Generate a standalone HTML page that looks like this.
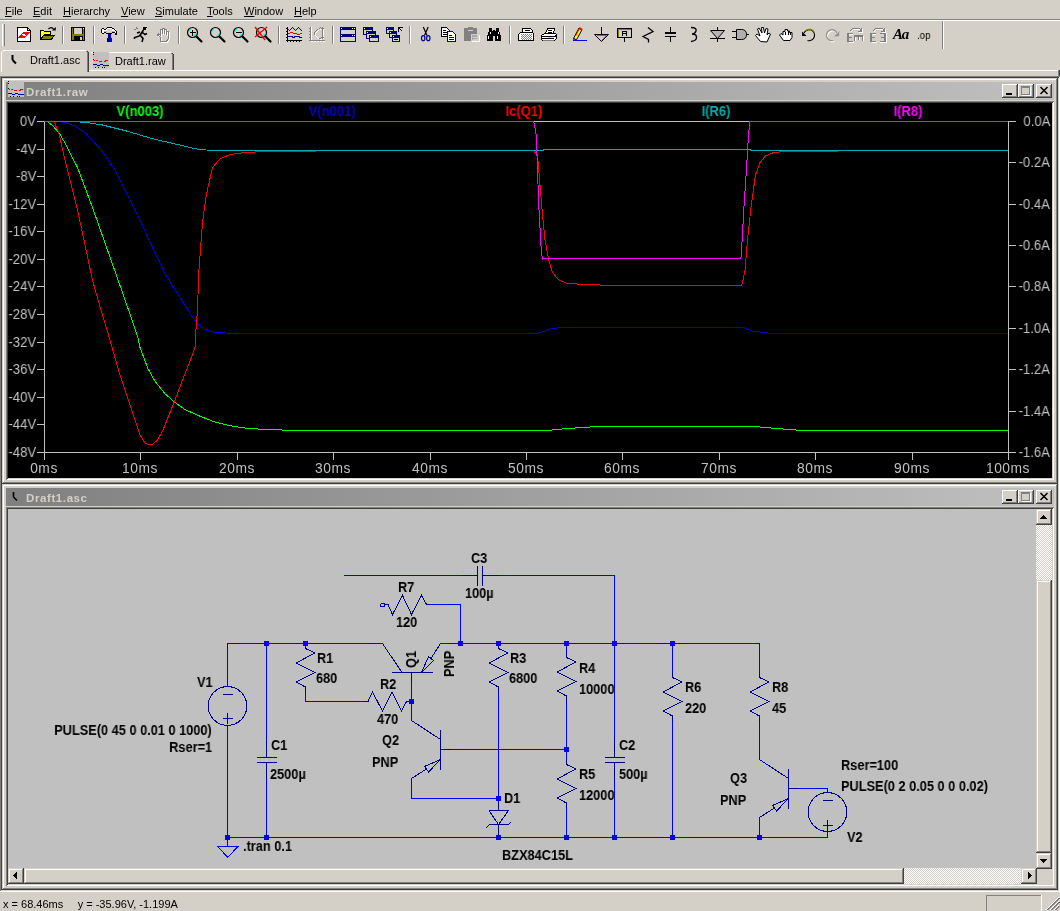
<!DOCTYPE html>
<html><head><meta charset="utf-8"><title>LTspice</title>
<style>
html,body{margin:0;padding:0;}
body{width:1060px;height:911px;background:#D4D0C8;position:relative;overflow:hidden;font-family:"Liberation Sans",sans-serif;}
.t{position:absolute;white-space:nowrap;line-height:1;will-change:transform;font-family:"Liberation Sans",sans-serif;}
svg{position:absolute;overflow:visible;}
u{text-decoration:underline;text-underline-offset:1px;}
</style></head><body>
<div class="t" style="left:5px;top:6px;font-size:11px;color:#000;font-weight:normal;"><u>F</u>ile</div>
<div class="t" style="left:33px;top:6px;font-size:11px;color:#000;font-weight:normal;"><u>E</u>dit</div>
<div class="t" style="left:63px;top:6px;font-size:11px;color:#000;font-weight:normal;"><u>H</u>ierarchy</div>
<div class="t" style="left:121px;top:6px;font-size:11px;color:#000;font-weight:normal;"><u>V</u>iew</div>
<div class="t" style="left:155px;top:6px;font-size:11px;color:#000;font-weight:normal;"><u>S</u>imulate</div>
<div class="t" style="left:207px;top:6px;font-size:11px;color:#000;font-weight:normal;"><u>T</u>ools</div>
<div class="t" style="left:244px;top:6px;font-size:11px;color:#000;font-weight:normal;"><u>W</u>indow</div>
<div class="t" style="left:294px;top:6px;font-size:11px;color:#000;font-weight:normal;"><u>H</u>elp</div>
<div style="position:absolute;left:0px;top:19px;width:1060px;height:1px;background:#808080;"></div>
<div style="position:absolute;left:0px;top:20px;width:1060px;height:1px;background:#FFFFFF;"></div>
<div style="position:absolute;left:2px;top:24px;width:1px;height:22px;background:#FFFFFF;"></div>
<div style="position:absolute;left:3px;top:24px;width:1px;height:22px;background:#D4D0C8;"></div>
<div style="position:absolute;left:4px;top:24px;width:1px;height:22px;background:#808080;"></div>
<div style="position:absolute;left:89px;top:70px;width:969px;height:1px;background:#FFFFFF;"></div>
<div style="position:absolute;left:1058px;top:70px;width:1px;height:6px;background:#808080;"></div>
<div style="position:absolute;left:1059px;top:70px;width:1px;height:6px;background:#404040;"></div>
<div style="position:absolute;left:1px;top:52px;width:1px;height:20px;background:#FFFFFF;"></div>
<div style="position:absolute;left:2px;top:51px;width:1px;height:1px;background:#FFFFFF;"></div>
<div style="position:absolute;left:3px;top:50px;width:83px;height:1px;background:#FFFFFF;"></div>
<div style="position:absolute;left:87px;top:52px;width:1px;height:20px;background:#808080;"></div>
<div style="position:absolute;left:88px;top:52px;width:1px;height:20px;background:#404040;"></div>
<div style="position:absolute;left:86px;top:51px;width:1px;height:1px;background:#808080;"></div>
<div style="position:absolute;left:87px;top:51px;width:1px;height:1px;background:#404040;"></div>
<div class="t" style="left:30px;top:55px;font-size:11px;color:#000;font-weight:normal;">Draft1.asc</div>
<svg style="left:11px;top:55px" width="10" height="11"><path d="M1.5 0v5M1.5 5l3.5 3.5" stroke="#000" stroke-width="2" fill="none"/></svg>
<div style="position:absolute;left:91px;top:52px;width:80px;height:1px;background:#FFFFFF;"></div>
<div style="position:absolute;left:172px;top:54px;width:1px;height:16px;background:#808080;"></div>
<div style="position:absolute;left:173px;top:54px;width:1px;height:16px;background:#404040;"></div>
<div style="position:absolute;left:171px;top:53px;width:1px;height:1px;background:#808080;"></div>
<div style="position:absolute;left:172px;top:53px;width:1px;height:1px;background:#404040;"></div>
<div class="t" style="left:115px;top:56px;font-size:11px;color:#000;font-weight:normal;">Draft1.raw</div>
<div style="position:absolute;left:93px;top:52px;width:16px;height:16px;background:#C0C0C0;"></div><svg style="left:93px;top:52px" width="16" height="16" shape-rendering="crispEdges"><path d="M1 8.5h1M3 8.5h2M6 9.5h3M11 9.5h2M12 8.5h3" stroke="#FF0000" stroke-width="1" fill="none"/><path d="M0 12.5h4M4 13.5h3M7 12.5h3M10 13.5h6" stroke="#0000A0" stroke-width="1" fill="none"/><path d="M0 0.5h1M0 2.5h1M0 7.5h1M2 15.5h1M5 15.5h1M9 15.5h1M11 15.5h1" stroke="#000" stroke-width="1"/></svg>
<div style="position:absolute;left:0px;top:76px;width:1060px;height:1px;background:#808080;"></div>
<div style="position:absolute;left:1px;top:77px;width:1058px;height:1px;background:#404040;"></div>
<div style="position:absolute;left:0px;top:76px;width:1px;height:815px;background:#808080;"></div>
<div style="position:absolute;left:1px;top:77px;width:1px;height:813px;background:#404040;"></div>
<div style="position:absolute;left:1058px;top:78px;width:1px;height:813px;background:#D4D0C8;"></div>
<div style="position:absolute;left:1059px;top:77px;width:1px;height:815px;background:#FFFFFF;"></div>
<div style="position:absolute;left:1px;top:890px;width:1058px;height:1px;background:#D4D0C8;"></div>
<div style="position:absolute;left:0px;top:891px;width:1060px;height:1px;background:#FFFFFF;"></div>
<div style="position:absolute;left:2px;top:78px;width:1056px;height:406px;background:#D4D0C8;"></div><div style="position:absolute;left:2px;top:483px;width:1056px;height:1px;background:#404040;"></div><div style="position:absolute;left:1057px;top:78px;width:1px;height:406px;background:#404040;"></div><div style="position:absolute;left:3px;top:482px;width:1054px;height:1px;background:#808080;"></div><div style="position:absolute;left:1056px;top:79px;width:1px;height:404px;background:#808080;"></div><div style="position:absolute;left:3px;top:79px;width:1053px;height:1px;background:#FFFFFF;"></div><div style="position:absolute;left:3px;top:79px;width:1px;height:403px;background:#FFFFFF;"></div><div style="position:absolute;left:6px;top:82px;width:1048px;height:18px;background:linear-gradient(to right,#808080,#C0C0C0);"></div><div style="position:absolute;left:8px;top:81px;width:16px;height:16px;background:#C0C0C0;"></div><svg style="left:8px;top:81px" width="16" height="16" shape-rendering="crispEdges"><path d="M1 8.5h1M3 8.5h2M6 9.5h3M11 9.5h2M12 8.5h3" stroke="#FF0000" stroke-width="1" fill="none"/><path d="M0 12.5h4M4 13.5h3M7 12.5h3M10 13.5h6" stroke="#0000A0" stroke-width="1" fill="none"/><path d="M0 0.5h1M0 2.5h1M0 7.5h1M2 15.5h1M5 15.5h1M9 15.5h1M11 15.5h1" stroke="#000" stroke-width="1"/></svg><div class="t" style="left:26px;top:87px;font-size:11.5px;color:#D4D0C8;font-weight:bold;letter-spacing:0.6px;">Draft1.raw</div><div style="position:absolute;left:1002px;top:84px;width:16px;height:14px;background:#D4D0C8;"></div><div style="position:absolute;left:1002px;top:84px;width:15px;height:1px;background:#FFFFFF;"></div><div style="position:absolute;left:1002px;top:84px;width:1px;height:13px;background:#FFFFFF;"></div><div style="position:absolute;left:1002px;top:97px;width:16px;height:1px;background:#404040;"></div><div style="position:absolute;left:1017px;top:84px;width:1px;height:14px;background:#404040;"></div><div style="position:absolute;left:1003px;top:96px;width:14px;height:1px;background:#808080;"></div><div style="position:absolute;left:1016px;top:85px;width:1px;height:12px;background:#808080;"></div><div style="position:absolute;left:1006px;top:93px;width:6px;height:2px;background:#000;"></div><div style="position:absolute;left:1018px;top:84px;width:16px;height:14px;background:#D4D0C8;"></div><div style="position:absolute;left:1018px;top:84px;width:15px;height:1px;background:#FFFFFF;"></div><div style="position:absolute;left:1018px;top:84px;width:1px;height:13px;background:#FFFFFF;"></div><div style="position:absolute;left:1018px;top:97px;width:16px;height:1px;background:#404040;"></div><div style="position:absolute;left:1033px;top:84px;width:1px;height:14px;background:#404040;"></div><div style="position:absolute;left:1019px;top:96px;width:14px;height:1px;background:#808080;"></div><div style="position:absolute;left:1032px;top:85px;width:1px;height:12px;background:#808080;"></div><div style="position:absolute;left:1021px;top:86px;width:9px;height:9px;background:#808080;"></div><div style="position:absolute;left:1022px;top:88px;width:7px;height:6px;background:#D4D0C8;"></div><div style="position:absolute;left:1022px;top:95px;width:9px;height:1px;background:#FFFFFF;"></div><div style="position:absolute;left:1030px;top:87px;width:1px;height:9px;background:#FFFFFF;"></div><div style="position:absolute;left:1036px;top:84px;width:16px;height:14px;background:#D4D0C8;"></div><div style="position:absolute;left:1036px;top:84px;width:15px;height:1px;background:#FFFFFF;"></div><div style="position:absolute;left:1036px;top:84px;width:1px;height:13px;background:#FFFFFF;"></div><div style="position:absolute;left:1036px;top:97px;width:16px;height:1px;background:#404040;"></div><div style="position:absolute;left:1051px;top:84px;width:1px;height:14px;background:#404040;"></div><div style="position:absolute;left:1037px;top:96px;width:14px;height:1px;background:#808080;"></div><div style="position:absolute;left:1050px;top:85px;width:1px;height:12px;background:#808080;"></div><svg style="left:1036px;top:84px" width="16" height="14"><path d="M4.5 3l7 7M11.5 3l-7 7" stroke="#000" stroke-width="1.5" fill="none"/></svg><div style="position:absolute;left:6px;top:101px;width:1048px;height:1px;background:#808080;"></div><div style="position:absolute;left:6px;top:101px;width:1px;height:379px;background:#808080;"></div><div style="position:absolute;left:7px;top:102px;width:1046px;height:1px;background:#404040;"></div><div style="position:absolute;left:7px;top:102px;width:1px;height:377px;background:#404040;"></div><div style="position:absolute;left:7px;top:479px;width:1047px;height:1px;background:#FFFFFF;"></div><div style="position:absolute;left:1053px;top:102px;width:1px;height:378px;background:#FFFFFF;"></div><div style="position:absolute;left:8px;top:478px;width:1045px;height:1px;background:#D4D0C8;"></div><div style="position:absolute;left:1052px;top:103px;width:1px;height:376px;background:#D4D0C8;"></div>
<div style="position:absolute;left:2px;top:484px;width:1056px;height:406px;background:#D4D0C8;"></div><div style="position:absolute;left:2px;top:889px;width:1056px;height:1px;background:#404040;"></div><div style="position:absolute;left:1057px;top:484px;width:1px;height:406px;background:#404040;"></div><div style="position:absolute;left:3px;top:888px;width:1054px;height:1px;background:#808080;"></div><div style="position:absolute;left:1056px;top:485px;width:1px;height:404px;background:#808080;"></div><div style="position:absolute;left:3px;top:485px;width:1053px;height:1px;background:#FFFFFF;"></div><div style="position:absolute;left:3px;top:485px;width:1px;height:403px;background:#FFFFFF;"></div><div style="position:absolute;left:6px;top:488px;width:1048px;height:18px;background:linear-gradient(to right,#808080,#C0C0C0);"></div><svg style="left:12px;top:492px" width="10" height="11"><path d="M1.5 0v5M1.5 5l3.5 3.5" stroke="#000" stroke-width="1.6" fill="none"/></svg><div class="t" style="left:26px;top:493px;font-size:11.5px;color:#D4D0C8;font-weight:bold;letter-spacing:0.6px;">Draft1.asc</div><div style="position:absolute;left:1002px;top:490px;width:16px;height:14px;background:#D4D0C8;"></div><div style="position:absolute;left:1002px;top:490px;width:15px;height:1px;background:#FFFFFF;"></div><div style="position:absolute;left:1002px;top:490px;width:1px;height:13px;background:#FFFFFF;"></div><div style="position:absolute;left:1002px;top:503px;width:16px;height:1px;background:#404040;"></div><div style="position:absolute;left:1017px;top:490px;width:1px;height:14px;background:#404040;"></div><div style="position:absolute;left:1003px;top:502px;width:14px;height:1px;background:#808080;"></div><div style="position:absolute;left:1016px;top:491px;width:1px;height:12px;background:#808080;"></div><div style="position:absolute;left:1006px;top:499px;width:6px;height:2px;background:#000;"></div><div style="position:absolute;left:1018px;top:490px;width:16px;height:14px;background:#D4D0C8;"></div><div style="position:absolute;left:1018px;top:490px;width:15px;height:1px;background:#FFFFFF;"></div><div style="position:absolute;left:1018px;top:490px;width:1px;height:13px;background:#FFFFFF;"></div><div style="position:absolute;left:1018px;top:503px;width:16px;height:1px;background:#404040;"></div><div style="position:absolute;left:1033px;top:490px;width:1px;height:14px;background:#404040;"></div><div style="position:absolute;left:1019px;top:502px;width:14px;height:1px;background:#808080;"></div><div style="position:absolute;left:1032px;top:491px;width:1px;height:12px;background:#808080;"></div><div style="position:absolute;left:1021px;top:492px;width:9px;height:9px;background:#808080;"></div><div style="position:absolute;left:1022px;top:494px;width:7px;height:6px;background:#D4D0C8;"></div><div style="position:absolute;left:1022px;top:501px;width:9px;height:1px;background:#FFFFFF;"></div><div style="position:absolute;left:1030px;top:493px;width:1px;height:9px;background:#FFFFFF;"></div><div style="position:absolute;left:1036px;top:490px;width:16px;height:14px;background:#D4D0C8;"></div><div style="position:absolute;left:1036px;top:490px;width:15px;height:1px;background:#FFFFFF;"></div><div style="position:absolute;left:1036px;top:490px;width:1px;height:13px;background:#FFFFFF;"></div><div style="position:absolute;left:1036px;top:503px;width:16px;height:1px;background:#404040;"></div><div style="position:absolute;left:1051px;top:490px;width:1px;height:14px;background:#404040;"></div><div style="position:absolute;left:1037px;top:502px;width:14px;height:1px;background:#808080;"></div><div style="position:absolute;left:1050px;top:491px;width:1px;height:12px;background:#808080;"></div><svg style="left:1036px;top:490px" width="16" height="14"><path d="M4.5 3l7 7M11.5 3l-7 7" stroke="#000" stroke-width="1.5" fill="none"/></svg><div style="position:absolute;left:6px;top:507px;width:1048px;height:1px;background:#808080;"></div><div style="position:absolute;left:6px;top:507px;width:1px;height:379px;background:#808080;"></div><div style="position:absolute;left:7px;top:508px;width:1046px;height:1px;background:#404040;"></div><div style="position:absolute;left:7px;top:508px;width:1px;height:377px;background:#404040;"></div><div style="position:absolute;left:7px;top:885px;width:1047px;height:1px;background:#FFFFFF;"></div><div style="position:absolute;left:1053px;top:508px;width:1px;height:378px;background:#FFFFFF;"></div><div style="position:absolute;left:8px;top:884px;width:1045px;height:1px;background:#D4D0C8;"></div><div style="position:absolute;left:1052px;top:509px;width:1px;height:376px;background:#D4D0C8;"></div>
<div class="t" style="left:3px;top:899px;font-size:11px;color:#000;font-weight:normal;">x = 68.46ms&nbsp;&nbsp;&nbsp;&nbsp;&thinsp;y = -35.96V, -1.199A</div>
<div style="position:absolute;left:986px;top:895px;width:56px;height:1px;background:#808080;"></div><div style="position:absolute;left:986px;top:895px;width:1px;height:16px;background:#808080;"></div><div style="position:absolute;left:1041px;top:895px;width:1px;height:16px;background:#FFFFFF;"></div>
<svg style="left:1046px;top:897px" width="14" height="14" shape-rendering="crispEdges"><path d="M13 1L1 13M13 5L5 13M13 9L9 13" stroke="#808080" stroke-width="2" fill="none"/><path d="M13 0L0 13M13 4L4 13M13 8L8 13" stroke="#FFFFFF" stroke-width="1" fill="none"/></svg>
<div style="position:absolute;left:8px;top:103px;width:1044px;height:375px;background:#000000;"></div>
<svg style="left:0;top:0" width="1060" height="911" shape-rendering="crispEdges" fill="none" stroke-width="1"><path stroke="#C0C0C0" d="M44.5 121v339M1008.5 121v339M44 121.5h965M37 452.5h979"/><path stroke="#C0C0C0" d="M37 121.5h8M37 149.5h8M37 176.5h8M37 204.5h8M37 231.5h8M37 259.5h8M37 286.5h8M37 314.5h8M37 342.5h8M37 369.5h8M37 397.5h8M37 424.5h8M37 452.5h8M1008 121.5h8M1008 162.5h8M1008 204.5h8M1008 245.5h8M1008 286.5h8M1008 328.5h8M1008 369.5h8M1008 411.5h8M1008 452.5h8M44.5 452v8M140.5 452v8M237.5 452v8M333.5 452v8M430.5 452v8M526.5 452v8M622.5 452v8M719.5 452v8M815.5 452v8M912.5 452v8M1008.5 452v8"/><polyline stroke="#00FF00" points="44.5,121.5 47.5,121.75 52,125 58.75,132.5 65,143 77.5,167.5 92.5,207.5 107.5,250 122.5,292.5 137.5,336 140,347.5 148,368.75 155,381.25 165,393.75 175,402.5 185,409.5 200,416.25 215,422 230,425.75 245,428 265,429.5 290,430.25 305,430.5 548,430.5 557,429.5 568,428.5 590,427 600,426.5 754,426.5 765,427.5 777,428.5 796,430 810,430.5 1008,430.5"/><polyline stroke="#0000C8" points="44.5,121.5 60,121.5 65,122.5 75,126 85,132.5 100,148.75 115,170 127.5,195 140,220 152.5,247.5 165,273.75 177.5,293.75 181.25,300 190,313.75 197.5,323.75 200,326.25 205,329.5 210,331.25 215,332.5 230,333.2 305,333.5 537.5,333.5 545,331 550,329 561,327.5 743.75,327.5 745,328 752.5,331.25 765,332.75 775,333.5 1008,333.5"/><polyline stroke="#FF0000" points="50,121.5 53.75,121.5 58.75,132.5 65,160 77.5,210 92.5,280 98,300 110,340 120,375 130,405 140,435 145,443 148.75,445 152.5,444.5 157.5,440 162.5,431.25 170,412.5 175,400 182.5,380 190,361.25 195,347.5 196.25,325 197.5,310 198.75,272.5 202.5,222.5 206.25,195 212.5,167.5 220,158.75 230,154.5 245,152.5 265,151.5 316,151.5"/><polyline stroke="#FF0000" points="534.25,151.5 537.5,155 540,185 542.5,215 545,240 548.75,260 552.5,272.5 558.75,280 566.25,283 580,284.25 605,285.2 741.25,285.5 742.5,282.5 745,270 747.5,240 751.25,205 755.5,175 760,162.5 765,156.25 772.5,153 782.5,151.5 837.5,151.5"/><polyline stroke="#00AAAA" points="44.5,121.5 77.5,121.75 90,123 102.5,125 127.5,131.25 152.5,138.75 177.5,144.5 195,148.75 206.25,150 220,150.5 543.75,150.5 544,149.5 750,149.5 750.5,150.5 1008,150.5"/><polyline stroke="#FF00FF" points="44.5,121.5 533.75,121.5 536.25,135 538.75,205 541.25,250 542.5,260 543,258.5 740.5,258.5 741.25,256.25 743.75,210 746.25,172.5 748.5,135 750,121.5 1008,121.5"/></svg>
<div class="t" style="right:1024px;top:115px;font-size:13.8px;color:#C0C0C0;transform-origin:100% 0;transform:scaleX(0.95)">0V</div>
<div class="t" style="right:1024px;top:143px;font-size:13.8px;color:#C0C0C0;transform-origin:100% 0;transform:scaleX(0.95)">-4V</div>
<div class="t" style="right:1024px;top:170px;font-size:13.8px;color:#C0C0C0;transform-origin:100% 0;transform:scaleX(0.95)">-8V</div>
<div class="t" style="right:1024px;top:198px;font-size:13.8px;color:#C0C0C0;transform-origin:100% 0;transform:scaleX(0.95)">-12V</div>
<div class="t" style="right:1024px;top:225px;font-size:13.8px;color:#C0C0C0;transform-origin:100% 0;transform:scaleX(0.95)">-16V</div>
<div class="t" style="right:1024px;top:253px;font-size:13.8px;color:#C0C0C0;transform-origin:100% 0;transform:scaleX(0.95)">-20V</div>
<div class="t" style="right:1024px;top:280px;font-size:13.8px;color:#C0C0C0;transform-origin:100% 0;transform:scaleX(0.95)">-24V</div>
<div class="t" style="right:1024px;top:308px;font-size:13.8px;color:#C0C0C0;transform-origin:100% 0;transform:scaleX(0.95)">-28V</div>
<div class="t" style="right:1024px;top:336px;font-size:13.8px;color:#C0C0C0;transform-origin:100% 0;transform:scaleX(0.95)">-32V</div>
<div class="t" style="right:1024px;top:363px;font-size:13.8px;color:#C0C0C0;transform-origin:100% 0;transform:scaleX(0.95)">-36V</div>
<div class="t" style="right:1024px;top:391px;font-size:13.8px;color:#C0C0C0;transform-origin:100% 0;transform:scaleX(0.95)">-40V</div>
<div class="t" style="right:1024px;top:418px;font-size:13.8px;color:#C0C0C0;transform-origin:100% 0;transform:scaleX(0.95)">-44V</div>
<div class="t" style="right:1024px;top:446px;font-size:13.8px;color:#C0C0C0;transform-origin:100% 0;transform:scaleX(0.95)">-48V</div>
<div class="t" style="right:10px;top:115px;font-size:13.8px;color:#C0C0C0;transform-origin:100% 0;transform:scaleX(0.95)">0.0A</div>
<div class="t" style="right:10px;top:156px;font-size:13.8px;color:#C0C0C0;transform-origin:100% 0;transform:scaleX(0.95)">-0.2A</div>
<div class="t" style="right:10px;top:198px;font-size:13.8px;color:#C0C0C0;transform-origin:100% 0;transform:scaleX(0.95)">-0.4A</div>
<div class="t" style="right:10px;top:239px;font-size:13.8px;color:#C0C0C0;transform-origin:100% 0;transform:scaleX(0.95)">-0.6A</div>
<div class="t" style="right:10px;top:280px;font-size:13.8px;color:#C0C0C0;transform-origin:100% 0;transform:scaleX(0.95)">-0.8A</div>
<div class="t" style="right:10px;top:322px;font-size:13.8px;color:#C0C0C0;transform-origin:100% 0;transform:scaleX(0.95)">-1.0A</div>
<div class="t" style="right:10px;top:363px;font-size:13.8px;color:#C0C0C0;transform-origin:100% 0;transform:scaleX(0.95)">-1.2A</div>
<div class="t" style="right:10px;top:405px;font-size:13.8px;color:#C0C0C0;transform-origin:100% 0;transform:scaleX(0.95)">-1.4A</div>
<div class="t" style="right:10px;top:446px;font-size:13.8px;color:#C0C0C0;transform-origin:100% 0;transform:scaleX(0.95)">-1.6A</div>
<div class="t" style="left:14px;width:60px;text-align:center;top:462px;font-size:13.8px;color:#C0C0C0;letter-spacing:0.55px">0ms</div>
<div class="t" style="left:110px;width:60px;text-align:center;top:462px;font-size:13.8px;color:#C0C0C0;letter-spacing:0.55px">10ms</div>
<div class="t" style="left:207px;width:60px;text-align:center;top:462px;font-size:13.8px;color:#C0C0C0;letter-spacing:0.55px">20ms</div>
<div class="t" style="left:303px;width:60px;text-align:center;top:462px;font-size:13.8px;color:#C0C0C0;letter-spacing:0.55px">30ms</div>
<div class="t" style="left:400px;width:60px;text-align:center;top:462px;font-size:13.8px;color:#C0C0C0;letter-spacing:0.55px">40ms</div>
<div class="t" style="left:496px;width:60px;text-align:center;top:462px;font-size:13.8px;color:#C0C0C0;letter-spacing:0.55px">50ms</div>
<div class="t" style="left:592px;width:60px;text-align:center;top:462px;font-size:13.8px;color:#C0C0C0;letter-spacing:0.55px">60ms</div>
<div class="t" style="left:689px;width:60px;text-align:center;top:462px;font-size:13.8px;color:#C0C0C0;letter-spacing:0.55px">70ms</div>
<div class="t" style="left:785px;width:60px;text-align:center;top:462px;font-size:13.8px;color:#C0C0C0;letter-spacing:0.55px">80ms</div>
<div class="t" style="left:882px;width:60px;text-align:center;top:462px;font-size:13.8px;color:#C0C0C0;letter-spacing:0.55px">90ms</div>
<div class="t" style="left:978px;width:60px;text-align:center;top:462px;font-size:13.8px;color:#C0C0C0;letter-spacing:0.55px">100ms</div>
<div class="t" style="left:100px;width:80px;text-align:center;top:105px;font-size:13.8px;font-weight:bold;color:#00FF00;transform:scaleX(0.94)">V(n003)</div>
<div class="t" style="left:291.5px;width:80px;text-align:center;top:105px;font-size:13.8px;font-weight:bold;color:#0000C8;transform:scaleX(0.94)">V(n001)</div>
<div class="t" style="left:484px;width:80px;text-align:center;top:105px;font-size:13.8px;font-weight:bold;color:#FF0000;transform:scaleX(0.94)">Ic(Q1)</div>
<div class="t" style="left:676px;width:80px;text-align:center;top:105px;font-size:13.8px;font-weight:bold;color:#00AAAA;transform:scaleX(0.94)">I(R6)</div>
<div class="t" style="left:868px;width:80px;text-align:center;top:105px;font-size:13.8px;font-weight:bold;color:#FF00FF;transform:scaleX(0.94)">I(R8)</div>
<div style="position:absolute;left:8px;top:509px;width:1028px;height:359px;background:#C0C0C0;"></div>
<svg style="left:0;top:0" width="1060" height="911" shape-rendering="crispEdges" fill="none" stroke-width="1"><path stroke="#0000FF" d="M227.5 686.5L227.5 643.5L382.5 643.5M440.5 643.5L759.5 643.5L759.5 672.5M227.5 725.5L227.5 846.5M227.5 837.5L827.5 837.5L827.5 831.5M217.5 846.5L238.5 846.5M217.5 846.5L228 857.5M238 846.5L227.5 857.5M266.5 643.5L266.5 740.5M266.5 779.22L266.5 837.5M305.5 691.9L305.5 701.5L363.5 701.5M411.5 682L411.5 720.5M431.5 604.5L460.5 604.5L460.5 643.5M343.5 575.5L460.5 575.5M499.22 575.5L614.5 575.5L614.5 643.5M498.5 691.9L498.5 798.5M450.5 749.5L566.5 749.5M411.5 778.5L411.5 798.5L498.5 798.5M566.5 643.5L566.5 652.5M566.5 700.9L566.5 759.5M566.5 807.9L566.5 837.5M614.5 643.5L614.5 740.5M614.5 779.22L614.5 837.5M672.5 643.5L672.5 672.5M672.5 720.9L672.5 837.5M759.5 720.9L759.5 759.5M798 788.5L827.5 788.5L827.5 792.5M759.5 817.5L759.5 837.5"/><path stroke="#000094" d="M208.14 706a19.36 19.36 0 1 0 38.72 0a19.36 19.36 0 1 0 -38.72 0M227.5 686.5L227.5 686.5M227.5 725.5L227.5 725.5M222.5 694.5L233.0 694.5M222.5 718.0L233.0 718.0M227.5 713.0L227.5 723.5M266.5 740.5L266.5 757.5M266.5 762.5L266.5 779.0M256.5 757.5L276.5 757.5M256.5 762.5L276.5 762.5M305.5 643.5L305.5 648.5L315.0 653.0L296.0 663.0L315.0 672.5L296.0 682.0L305.5 687.0L305.5 692.0M363.0 701.5L368.0 701.5L372.5 692.0L382.5 711.0L392.0 692.0L401.5 711.0L406.5 701.5L411.5 701.5M392.0 672.5L432.5 672.5M411.5 672.5L411.5 682.0M382.5 643.5L402.0 672.5M440.5 643.5L431.0 658.5M421.5 672.5L428.5 656.5L433.5 660.5L421.5 672.5M380.5 603.5L384.5 603.5L384.5 606.5L380.5 606.5L380.5 603.5M385.0 604.5L388.0 604.5L392.5 614.5L402.5 595.5L411.5 614.5L421.5 595.5L426.5 604.5L431.5 604.5M460.5 575.5L477.5 575.5M482.5 575.5L499.0 575.5M477.5 565.5L477.5 585.5M482.5 565.5L482.5 585.5M498.5 643.5L498.5 648.5L508.0 653.0L489.0 663.0L508.0 672.5L489.0 682.0L498.5 687.0L498.5 692.0M498.5 798.5L498.5 810.5M489.0 810.5L509.0 810.5M489.0 810.5L498.5 824.5M508.5 810.5L498.5 824.5M486.0 828.0L489.5 824.5L508.5 824.5L511.0 822.0M498.5 824.5L498.5 837.5M440.5 730.0L440.5 770.0M440.5 749.5L450.5 749.5M411.5 720.5L440.5 739.5M426.5 769.0L411.5 778.5M440.5 759.5L424.5 766.5L428.5 772.0L440.5 759.5M566.5 652.5L566.5 657.5L576.0 662.0L557.0 672.0L576.0 681.5L557.0 691.0L566.5 696.0L566.5 701.0M566.5 759.5L566.5 764.5L576.0 769.0L557.0 779.0L576.0 788.5L557.0 798.0L566.5 803.0L566.5 808.0M614.5 740.5L614.5 757.5M614.5 762.5L614.5 779.0M604.5 757.5L624.5 757.5M604.5 762.5L624.5 762.5M672.5 672.5L672.5 677.5L682.0 682.0L663.0 692.0L682.0 701.5L663.0 711.0L672.5 716.0L672.5 721.0M759.5 672.5L759.5 677.5L769.0 682.0L750.0 692.0L769.0 701.5L750.0 711.0L759.5 716.0L759.5 721.0M788.5 769.0L788.5 809.0M788.5 788.5L798.0 788.5M759.5 759.5L788.5 778.5M774.5 808.0L759.5 817.5M788.5 798.5L772.5 805.5L776.5 811.0L788.5 798.5M808.14 812a19.36 19.36 0 1 0 38.72 0a19.36 19.36 0 1 0 -38.72 0M827.5 792.5L827.5 792.5M827.5 831.5L827.5 831.5M822.5 800.0L833.0 800.0M822.5 825.0L833.0 825.0M827.5 820.0L827.5 830.5"/><rect x="264.0" y="641.0" width="5" height="5" fill="#0000FF"/><rect x="303.0" y="641.0" width="5" height="5" fill="#0000FF"/><rect x="458.0" y="641.0" width="5" height="5" fill="#0000FF"/><rect x="496.0" y="641.0" width="5" height="5" fill="#0000FF"/><rect x="564.0" y="641.0" width="5" height="5" fill="#0000FF"/><rect x="612.0" y="641.0" width="5" height="5" fill="#0000FF"/><rect x="670.0" y="641.0" width="5" height="5" fill="#0000FF"/><rect x="225.0" y="835.0" width="5" height="5" fill="#0000FF"/><rect x="264.0" y="835.0" width="5" height="5" fill="#0000FF"/><rect x="496.0" y="835.0" width="5" height="5" fill="#0000FF"/><rect x="564.0" y="835.0" width="5" height="5" fill="#0000FF"/><rect x="612.0" y="835.0" width="5" height="5" fill="#0000FF"/><rect x="670.0" y="835.0" width="5" height="5" fill="#0000FF"/><rect x="757.0" y="835.0" width="5" height="5" fill="#0000FF"/><rect x="409.0" y="699.0" width="5" height="5" fill="#0000FF"/><rect x="496.0" y="796.0" width="5" height="5" fill="#0000FF"/><rect x="564.0" y="747.0" width="5" height="5" fill="#0000FF"/></svg>
<style>.sl{font-size:14px;font-weight:bold;color:#000;transform-origin:0 0;transform:scaleX(0.912);}</style>
<div class="t sl" style="left:197px;top:675.4px;">V1</div>
<div class="t sl" style="transform-origin:100% 0;right:848px;top:723.4px">PULSE(0 45 0 0.01 0 1000)</div>
<div class="t sl" style="transform-origin:100% 0;right:848px;top:740.4px">Rser=1</div>
<div class="t sl" style="left:271px;top:738.4px;">C1</div>
<div class="t sl" style="left:270px;top:767.4px;">2500µ</div>
<div class="t sl" style="left:317px;top:651.4px;">R1</div>
<div class="t sl" style="left:316px;top:671.4px;">680</div>
<div class="t sl" style="left:380px;top:677.4px;">R2</div>
<div class="t sl" style="left:377px;top:712.4px;">470</div>
<div class="t sl" style="left:398px;top:580.4px;">R7</div>
<div class="t sl" style="left:396px;top:615.4px;">120</div>
<div class="t sl" style="left:471px;top:551.4px;">C3</div>
<div class="t sl" style="left:465px;top:586.4px;">100µ</div>
<div class="t sl" style="left:510px;top:651.4px;">R3</div>
<div class="t sl" style="left:509px;top:671.4px;">6800</div>
<div class="t sl" style="left:579px;top:661.4px;">R4</div>
<div class="t sl" style="left:579px;top:682.4px;">10000</div>
<div class="t sl" style="left:579px;top:767.4px;">R5</div>
<div class="t sl" style="left:579px;top:788.4px;">12000</div>
<div class="t sl" style="left:619px;top:738.4px;">C2</div>
<div class="t sl" style="left:619px;top:767.4px;">500µ</div>
<div class="t sl" style="left:685px;top:680.4px;">R6</div>
<div class="t sl" style="left:685px;top:701.4px;">220</div>
<div class="t sl" style="left:772px;top:680.4px;">R8</div>
<div class="t sl" style="left:772px;top:701.4px;">45</div>
<div class="t sl" style="left:382px;top:733.4px;">Q2</div>
<div class="t sl" style="left:372px;top:755.4px;">PNP</div>
<div class="t sl" style="left:730px;top:771.4px;">Q3</div>
<div class="t sl" style="left:720px;top:793.4px;">PNP</div>
<div class="t sl" style="left:504px;top:791.4px;">D1</div>
<div class="t sl" style="left:502px;top:848.4px;">BZX84C15L</div>
<div class="t sl" style="left:841px;top:758.4px;">Rser=100</div>
<div class="t sl" style="left:841px;top:779.4px;">PULSE(0 2 0.05 0 0 0.02)</div>
<div class="t sl" style="left:847px;top:830.4px;">V2</div>
<div class="t sl" style="left:243px;top:839.4px;">.tran 0.1</div>
<div class="t sl" style="left:404px;top:668px;transform-origin:0 0;transform:rotate(-90deg) scaleX(0.912)">Q1</div>
<div class="t sl" style="left:442px;top:677px;transform-origin:0 0;transform:rotate(-90deg) scaleX(0.912)">PNP</div>
<div style="position:absolute;left:1036px;top:509px;width:16px;height:360px;background:repeating-conic-gradient(#FFFFFF 0% 25%, #D4D0C8 0% 50%) 0 0/2px 2px;"></div>
<div style="position:absolute;left:1036px;top:509px;width:16px;height:16px;background:#D4D0C8;"></div><div style="position:absolute;left:1036px;top:509px;width:15px;height:1px;background:#D4D0C8;"></div><div style="position:absolute;left:1036px;top:509px;width:1px;height:15px;background:#D4D0C8;"></div><div style="position:absolute;left:1037px;top:510px;width:13px;height:1px;background:#FFFFFF;"></div><div style="position:absolute;left:1037px;top:510px;width:1px;height:13px;background:#FFFFFF;"></div><div style="position:absolute;left:1036px;top:524px;width:16px;height:1px;background:#404040;"></div><div style="position:absolute;left:1051px;top:509px;width:1px;height:16px;background:#404040;"></div><div style="position:absolute;left:1037px;top:523px;width:14px;height:1px;background:#808080;"></div><div style="position:absolute;left:1050px;top:510px;width:1px;height:14px;background:#808080;"></div>
<svg style="left:0;top:0" width="1060" height="911" shape-rendering="crispEdges"><path d="M1040 519h7l-3.5 -4z" fill="#000"/></svg>
<div style="position:absolute;left:1036px;top:853px;width:16px;height:16px;background:#D4D0C8;"></div><div style="position:absolute;left:1036px;top:853px;width:15px;height:1px;background:#D4D0C8;"></div><div style="position:absolute;left:1036px;top:853px;width:1px;height:15px;background:#D4D0C8;"></div><div style="position:absolute;left:1037px;top:854px;width:13px;height:1px;background:#FFFFFF;"></div><div style="position:absolute;left:1037px;top:854px;width:1px;height:13px;background:#FFFFFF;"></div><div style="position:absolute;left:1036px;top:868px;width:16px;height:1px;background:#404040;"></div><div style="position:absolute;left:1051px;top:853px;width:1px;height:16px;background:#404040;"></div><div style="position:absolute;left:1037px;top:867px;width:14px;height:1px;background:#808080;"></div><div style="position:absolute;left:1050px;top:854px;width:1px;height:14px;background:#808080;"></div>
<svg style="left:0;top:0" width="1060" height="911" shape-rendering="crispEdges"><path d="M1040 859h7l-3.5 4z" fill="#000"/></svg>
<div style="position:absolute;left:1036px;top:580px;width:16px;height:273px;background:#D4D0C8;"></div><div style="position:absolute;left:1036px;top:580px;width:15px;height:1px;background:#D4D0C8;"></div><div style="position:absolute;left:1036px;top:580px;width:1px;height:272px;background:#D4D0C8;"></div><div style="position:absolute;left:1037px;top:581px;width:13px;height:1px;background:#FFFFFF;"></div><div style="position:absolute;left:1037px;top:581px;width:1px;height:270px;background:#FFFFFF;"></div><div style="position:absolute;left:1036px;top:852px;width:16px;height:1px;background:#404040;"></div><div style="position:absolute;left:1051px;top:580px;width:1px;height:273px;background:#404040;"></div><div style="position:absolute;left:1037px;top:851px;width:14px;height:1px;background:#808080;"></div><div style="position:absolute;left:1050px;top:581px;width:1px;height:271px;background:#808080;"></div>
<div style="position:absolute;left:1036px;top:869px;width:16px;height:15px;background:#D4D0C8;"></div>
<div style="position:absolute;left:8px;top:868px;width:1029px;height:16px;background:repeating-conic-gradient(#FFFFFF 0% 25%, #D4D0C8 0% 50%) 0 0/2px 2px;"></div>
<div style="position:absolute;left:8px;top:868px;width:16px;height:16px;background:#D4D0C8;"></div><div style="position:absolute;left:8px;top:868px;width:15px;height:1px;background:#D4D0C8;"></div><div style="position:absolute;left:8px;top:868px;width:1px;height:15px;background:#D4D0C8;"></div><div style="position:absolute;left:9px;top:869px;width:13px;height:1px;background:#FFFFFF;"></div><div style="position:absolute;left:9px;top:869px;width:1px;height:13px;background:#FFFFFF;"></div><div style="position:absolute;left:8px;top:883px;width:16px;height:1px;background:#404040;"></div><div style="position:absolute;left:23px;top:868px;width:1px;height:16px;background:#404040;"></div><div style="position:absolute;left:9px;top:882px;width:14px;height:1px;background:#808080;"></div><div style="position:absolute;left:22px;top:869px;width:1px;height:14px;background:#808080;"></div>
<svg style="left:0;top:0" width="1060" height="911" shape-rendering="crispEdges"><path d="M17 872v7l-4 -3.5z" fill="#000"/></svg>
<div style="position:absolute;left:1021px;top:868px;width:16px;height:16px;background:#D4D0C8;"></div><div style="position:absolute;left:1021px;top:868px;width:15px;height:1px;background:#D4D0C8;"></div><div style="position:absolute;left:1021px;top:868px;width:1px;height:15px;background:#D4D0C8;"></div><div style="position:absolute;left:1022px;top:869px;width:13px;height:1px;background:#FFFFFF;"></div><div style="position:absolute;left:1022px;top:869px;width:1px;height:13px;background:#FFFFFF;"></div><div style="position:absolute;left:1021px;top:883px;width:16px;height:1px;background:#404040;"></div><div style="position:absolute;left:1036px;top:868px;width:1px;height:16px;background:#404040;"></div><div style="position:absolute;left:1022px;top:882px;width:14px;height:1px;background:#808080;"></div><div style="position:absolute;left:1035px;top:869px;width:1px;height:14px;background:#808080;"></div>
<svg style="left:0;top:0" width="1060" height="911" shape-rendering="crispEdges"><path d="M1028 872v7l4 -3.5z" fill="#000"/></svg>
<div style="position:absolute;left:24px;top:868px;width:880px;height:16px;background:#D4D0C8;"></div><div style="position:absolute;left:24px;top:868px;width:879px;height:1px;background:#D4D0C8;"></div><div style="position:absolute;left:24px;top:868px;width:1px;height:15px;background:#D4D0C8;"></div><div style="position:absolute;left:25px;top:869px;width:877px;height:1px;background:#FFFFFF;"></div><div style="position:absolute;left:25px;top:869px;width:1px;height:13px;background:#FFFFFF;"></div><div style="position:absolute;left:24px;top:883px;width:880px;height:1px;background:#404040;"></div><div style="position:absolute;left:903px;top:868px;width:1px;height:16px;background:#404040;"></div><div style="position:absolute;left:25px;top:882px;width:878px;height:1px;background:#808080;"></div><div style="position:absolute;left:902px;top:869px;width:1px;height:14px;background:#808080;"></div>
<div style="position:absolute;left:62px;top:26px;width:1px;height:18px;background:#808080;"></div><div style="position:absolute;left:63px;top:26px;width:1px;height:18px;background:#FFFFFF;"></div>
<div style="position:absolute;left:93px;top:26px;width:1px;height:18px;background:#808080;"></div><div style="position:absolute;left:94px;top:26px;width:1px;height:18px;background:#FFFFFF;"></div>
<div style="position:absolute;left:124px;top:26px;width:1px;height:18px;background:#808080;"></div><div style="position:absolute;left:125px;top:26px;width:1px;height:18px;background:#FFFFFF;"></div>
<div style="position:absolute;left:178px;top:26px;width:1px;height:18px;background:#808080;"></div><div style="position:absolute;left:179px;top:26px;width:1px;height:18px;background:#FFFFFF;"></div>
<div style="position:absolute;left:278px;top:26px;width:1px;height:18px;background:#808080;"></div><div style="position:absolute;left:279px;top:26px;width:1px;height:18px;background:#FFFFFF;"></div>
<div style="position:absolute;left:332px;top:26px;width:1px;height:18px;background:#808080;"></div><div style="position:absolute;left:333px;top:26px;width:1px;height:18px;background:#FFFFFF;"></div>
<div style="position:absolute;left:409px;top:26px;width:1px;height:18px;background:#808080;"></div><div style="position:absolute;left:410px;top:26px;width:1px;height:18px;background:#FFFFFF;"></div>
<div style="position:absolute;left:509px;top:26px;width:1px;height:18px;background:#808080;"></div><div style="position:absolute;left:510px;top:26px;width:1px;height:18px;background:#FFFFFF;"></div>
<div style="position:absolute;left:563px;top:26px;width:1px;height:18px;background:#808080;"></div><div style="position:absolute;left:564px;top:26px;width:1px;height:18px;background:#FFFFFF;"></div>
<div style="position:absolute;left:942px;top:21px;width:1px;height:28px;background:#808080;"></div><div style="position:absolute;left:943px;top:21px;width:1px;height:28px;background:#FFFFFF;"></div>
<svg style="left:17px;top:27px" width="16" height="16" shape-rendering="crispEdges"><path d="M0.5 0.5h10l3 3v11h-13z" fill="#fff" stroke="#000"/><path d="M10.5 0.5v3h3" fill="none" stroke="#000"/><path d="M6 5h7l-5 6h-7z" fill="#f00"/><path d="M6 7h2v2h-2z" fill="#fff"/><rect x="8" y="8" width="1" height="1" fill="#fff"/><rect x="5" y="7" width="1" height="1" fill="#fff"/></svg>
<svg style="left:40px;top:27px" width="16" height="16" shape-rendering="crispEdges"><defs><pattern id="dy" width="2" height="2" patternUnits="userSpaceOnUse"><rect width="2" height="2" fill="#ff0"/><rect width="1" height="1" fill="#fff"/><rect x="1" y="1" width="1" height="1" fill="#fff"/></pattern></defs><path d="M0.5 12.5v-9h3l1 1h6v3h-6z" fill="url(#dy)" stroke="#000"/><path d="M0.5 12.5l3.5-4.500h11l-4 4.500z" fill="#808000" stroke="#000"/><g shape-rendering="auto"><path d="M8.500 2Q11 -1 14 2.500" fill="none" stroke="#000" stroke-width="1.200"/><path d="M12 3.500h3.800v-3.500z" fill="#000"/></g></svg>
<svg style="left:71px;top:27px" width="16" height="16" shape-rendering="crispEdges"><rect x="0.5" y="0.5" width="13" height="13" fill="#808000" stroke="#000"/><rect x="3" y="1" width="8" height="6" fill="#D4D0C8"/><rect x="2" y="1" width="1" height="6" fill="#000"/><rect x="11" y="1" width="1" height="6" fill="#000"/><rect x="12" y="1" width="1" height="1" fill="#fff"/><rect x="3" y="9" width="9" height="4" fill="#000"/><rect x="9" y="10" width="2" height="3" fill="#D4D0C8"/></svg>
<svg style="left:101px;top:27px" width="16" height="16" shape-rendering="crispEdges"><rect x="1" y="2" width="14" height="4" fill="#fff"/><rect x="6" y="1" width="5" height="1" fill="#fff"/><rect x="1" y="5" width="2" height="1" fill="#fff"/><rect x="5" y="5" width="6" height="1" fill="#C8C8C8"/><rect x="6" y="2" width="5" height="3" fill="#D8D4CC"/><rect x="3" y="4" width="3" height="1" fill="#B0B0B0"/><rect x="11" y="4" width="3" height="1" fill="#B0B0B0"/><rect x="14" y="5" width="1" height="1" fill="#fff"/><rect x="0" y="2" width="1" height="4" fill="#000"/><rect x="1" y="1" width="2" height="1" fill="#000"/><rect x="3" y="2" width="2" height="1" fill="#000"/><rect x="5" y="1" width="1" height="1" fill="#000"/><rect x="6" y="0" width="5" height="1" fill="#000"/><rect x="11" y="1" width="2" height="1" fill="#000"/><rect x="13" y="2" width="1" height="1" fill="#000"/><rect x="14" y="3" width="1" height="1" fill="#000"/><rect x="15" y="4" width="1" height="4" fill="#000"/><rect x="11" y="5" width="3" height="1" fill="#000"/><rect x="14" y="6" width="1" height="2" fill="#000"/><rect x="1" y="6" width="2" height="1" fill="#000"/><rect x="3" y="5" width="2" height="1" fill="#000"/><rect x="5" y="6" width="6" height="1" fill="#000"/><rect x="7" y="7" width="3" height="4" fill="#000080"/><rect x="8" y="7" width="2" height="4" fill="#0000C0"/><rect x="9" y="7" width="1" height="4" fill="#0000FF"/><rect x="6" y="11" width="5" height="4" fill="#000080"/><rect x="8" y="11" width="1" height="4" fill="#0000C0"/><rect x="9" y="11" width="2" height="4" fill="#0000FF"/></svg>
<svg style="left:133px;top:27px" width="16" height="16" shape-rendering="crispEdges"><path d="M10 0h4v1h-1v2h-3z" fill="#000"/><path d="M10.5 3L6.5 9M7 5l-3 1M9.5 5.5l2.5 2l2-1M6.5 9l-5 1.5v1.5M7.5 8.5l2.5 3l-1 3.5" stroke="#000" stroke-width="1.6" fill="none" shape-rendering="auto"/><path d="M1 2l2 1M3 0.5l2 1.5" stroke="#808080" fill="none"/></svg>
<svg style="left:156px;top:27px" width="16" height="16" shape-rendering="crispEdges"><path d="M4.5 10.5l-3-2.5l1-1l2 1.5V2.5h2V7V1.5h2V7V2.5h2V8V4.5h2v6.5l-2 3.5h-6z" transform="translate(1,1)" fill="none" stroke="#fff"/><path d="M4.5 10.5l-3-2.5l1-1l2 1.5V2.5h2V7V1.5h2V7V2.5h2V8V4.5h2v6.5l-2 3.5h-6z" fill="none" stroke="#808080"/></svg>
<svg style="left:187px;top:27px" width="16" height="16" shape-rendering="crispEdges"><g shape-rendering="auto"><circle cx="5.5" cy="5.5" r="5" fill="#D4D0C8" stroke="#000" stroke-width="1.2"/><path d="M2.2 4.2a3.6 3.6 0 0 1 2-2M8.8 6.8a3.6 3.6 0 0 1 -2 2" stroke="#00FFFF" stroke-width="1.2" fill="none"/><path d="M9.5 9.5l5 5" stroke="#000" stroke-width="2.2" stroke-linecap="round"/></g><path d="M2.5 5.5h6M5.5 2.5v6" stroke="#000" fill="none"/></svg>
<svg style="left:210px;top:27px" width="16" height="16" shape-rendering="crispEdges"><g shape-rendering="auto"><circle cx="5.5" cy="5.5" r="5" fill="#D4D0C8" stroke="#000" stroke-width="1.2"/><path d="M2.2 4.2a3.6 3.6 0 0 1 2-2M8.8 6.8a3.6 3.6 0 0 1 -2 2" stroke="#00FFFF" stroke-width="1.2" fill="none"/><path d="M9.5 9.5l5 5" stroke="#000" stroke-width="2.2" stroke-linecap="round"/></g></svg>
<svg style="left:233px;top:27px" width="16" height="16" shape-rendering="crispEdges"><g shape-rendering="auto"><circle cx="5.5" cy="5.5" r="5" fill="#D4D0C8" stroke="#000" stroke-width="1.2"/><path d="M2.2 4.2a3.6 3.6 0 0 1 2-2M8.8 6.8a3.6 3.6 0 0 1 -2 2" stroke="#00FFFF" stroke-width="1.2" fill="none"/><path d="M9.5 9.5l5 5" stroke="#000" stroke-width="2.2" stroke-linecap="round"/></g><path d="M2.5 5.5h6" stroke="#000" fill="none"/></svg>
<svg style="left:256px;top:27px" width="16" height="16" shape-rendering="crispEdges"><g shape-rendering="auto"><circle cx="5.5" cy="5.5" r="5" fill="#D4D0C8" stroke="#000" stroke-width="1.2"/><path d="M2.2 4.2a3.6 3.6 0 0 1 2-2M8.8 6.8a3.6 3.6 0 0 1 -2 2" stroke="#00FFFF" stroke-width="1.2" fill="none"/><path d="M9.5 9.5l5 5" stroke="#000" stroke-width="2.2" stroke-linecap="round"/></g><path d="M-1 0l10 13M11 0l-12 10" stroke="#f00" stroke-width="1.4" fill="none" shape-rendering="auto"/></svg>
<svg style="left:286px;top:27px" width="16" height="16" shape-rendering="crispEdges"><rect x="1" y="0" width="1" height="14" fill="#000"/><rect x="0" y="13" width="16" height="1" fill="#000"/><rect x="0" y="1" width="1" height="1" fill="#000"/><rect x="0" y="4" width="1" height="1" fill="#000"/><rect x="0" y="7" width="1" height="1" fill="#000"/><rect x="0" y="10" width="1" height="1" fill="#000"/><rect x="1" y="14" width="1" height="1" fill="#000"/><rect x="4" y="14" width="1" height="1" fill="#000"/><rect x="7" y="14" width="1" height="1" fill="#000"/><rect x="10" y="14" width="1" height="1" fill="#000"/><rect x="13" y="14" width="1" height="1" fill="#000"/><rect x="6" y="0" width="1" height="1" fill="#0000A0"/><rect x="12" y="0" width="1" height="1" fill="#0000A0"/><rect x="5" y="1" width="1" height="1" fill="#0000A0"/><rect x="7" y="1" width="1" height="1" fill="#0000A0"/><rect x="11" y="1" width="1" height="1" fill="#0000A0"/><rect x="13" y="1" width="1" height="1" fill="#0000A0"/><rect x="4" y="2" width="1" height="1" fill="#0000A0"/><rect x="8" y="2" width="1" height="1" fill="#0000A0"/><rect x="10" y="2" width="1" height="1" fill="#0000A0"/><rect x="14" y="2" width="1" height="1" fill="#0000A0"/><rect x="3" y="3" width="1" height="1" fill="#0000A0"/><rect x="9" y="3" width="1" height="1" fill="#0000A0"/><rect x="15" y="3" width="1" height="1" fill="#0000A0"/><rect x="2" y="2" width="1" height="1" fill="#A000A0"/><rect x="9" y="3" width="1" height="1" fill="#A000A0"/><rect x="4" y="5" width="3" height="1" fill="#f00"/><rect x="2" y="6" width="2" height="1" fill="#f00"/><rect x="7" y="6" width="4" height="1" fill="#f00"/><rect x="14" y="6" width="2" height="1" fill="#f00"/><rect x="11" y="7" width="3" height="1" fill="#f00"/><rect x="2" y="9" width="5" height="1" fill="#0000A0"/><rect x="8" y="9" width="6" height="1" fill="#0000A0"/><rect x="6" y="10" width="3" height="1" fill="#0000A0"/><rect x="13" y="10" width="3" height="1" fill="#0000A0"/></svg>
<svg style="left:309px;top:27px" width="16" height="16" shape-rendering="crispEdges"><rect x="1" y="0" width="1" height="14" fill="#808080"/><rect x="2" y="0" width="1" height="13" fill="#fff"/><rect x="0" y="13" width="16" height="1" fill="#808080"/><rect x="0" y="1" width="1" height="1" fill="#808080"/><rect x="0" y="4" width="1" height="1" fill="#808080"/><rect x="0" y="7" width="1" height="1" fill="#808080"/><rect x="0" y="10" width="1" height="1" fill="#808080"/><rect x="2" y="14" width="2" height="1" fill="#fff"/><rect x="5" y="14" width="2" height="1" fill="#fff"/><rect x="8" y="14" width="2" height="1" fill="#fff"/><rect x="11" y="14" width="2" height="1" fill="#fff"/><rect x="14" y="14" width="2" height="1" fill="#fff"/><rect x="11" y="0" width="1" height="1" fill="#808080"/><rect x="10" y="1" width="1" height="1" fill="#808080"/><rect x="8" y="2" width="1" height="1" fill="#808080"/><rect x="7" y="3" width="1" height="1" fill="#808080"/><rect x="6" y="4" width="1" height="1" fill="#808080"/><rect x="5" y="5" width="1" height="1" fill="#808080"/><rect x="5" y="6" width="1" height="1" fill="#808080"/><rect x="5" y="7" width="1" height="1" fill="#808080"/><rect x="6" y="8" width="1" height="1" fill="#808080"/><rect x="7" y="9" width="1" height="1" fill="#808080"/><rect x="8" y="10" width="1" height="1" fill="#808080"/><rect x="10" y="11" width="1" height="1" fill="#808080"/><rect x="11" y="11" width="1" height="1" fill="#808080"/><rect x="12" y="1" width="1" height="1" fill="#fff"/><rect x="11" y="2" width="1" height="1" fill="#fff"/><rect x="9" y="3" width="1" height="1" fill="#fff"/><rect x="8" y="4" width="1" height="1" fill="#fff"/><rect x="7" y="5" width="1" height="1" fill="#fff"/><rect x="6" y="6" width="1" height="1" fill="#fff"/><rect x="6" y="7" width="1" height="1" fill="#fff"/><rect x="6" y="8" width="1" height="1" fill="#fff"/><rect x="7" y="9" width="1" height="1" fill="#fff"/><rect x="8" y="10" width="1" height="1" fill="#fff"/><rect x="9" y="11" width="1" height="1" fill="#fff"/><rect x="11" y="12" width="1" height="1" fill="#fff"/><rect x="12" y="12" width="1" height="1" fill="#fff"/><rect x="13" y="0" width="1" height="12" fill="#808080"/><rect x="14" y="1" width="1" height="11" fill="#fff"/><rect x="12" y="1" width="1" height="1" fill="#808080"/><rect x="14" y="1" width="1" height="1" fill="#808080"/><rect x="12" y="10" width="1" height="1" fill="#808080"/><rect x="14" y="10" width="1" height="1" fill="#808080"/></svg>
<svg style="left:340px;top:27px" width="16" height="16" shape-rendering="crispEdges"><rect x="0.5" y="0.5" width="15" height="7" fill="#D4D0C8" stroke="#000080"/><rect x="0" y="0" width="16" height="3" fill="#000080"/><rect x="0.5" y="7.5" width="15" height="7" fill="#D4D0C8" stroke="#000080"/><rect x="0" y="7" width="16" height="3" fill="#000080"/><path d="M1 1.5h1M12 1.5h1M14 1.5h1M1 8.5h1M12 8.5h1M14 8.5h1" stroke="#fff"/></svg>
<svg style="left:363px;top:27px" width="16" height="16" shape-rendering="crispEdges"><rect x="0.5" y="0.5" width="9" height="7" fill="#D4D0C8" stroke="#000080"/><rect x="0" y="0" width="10" height="3" fill="#000080"/><rect x="3.5" y="4.5" width="9" height="7" fill="#D4D0C8" stroke="#000080"/><rect x="3" y="4" width="10" height="3" fill="#000080"/><rect x="6.5" y="8.5" width="9" height="6" fill="#D4D0C8" stroke="#000080"/><rect x="6" y="8" width="10" height="3" fill="#000080"/><path d="M1 1.5h1M4 5.5h1M7 9.5h1" stroke="#fff"/></svg>
<svg style="left:386px;top:27px" width="16" height="16" shape-rendering="crispEdges"><rect x="0.5" y="0.5" width="7" height="6" fill="#D4D0C8" stroke="#000080"/><rect x="0" y="0" width="8" height="3" fill="#000080"/><rect x="3.5" y="4.5" width="7" height="6" fill="#D4D0C8" stroke="#000080"/><rect x="3" y="4" width="8" height="3" fill="#000080"/><rect x="6.5" y="8.5" width="7" height="6" fill="#D4D0C8" stroke="#000080"/><rect x="6" y="8" width="8" height="3" fill="#000080"/><rect x="8" y="12" width="4" height="1" fill="#000"/><path d="M12.500 4.500v-4h4M12.500 0.500l4 4" stroke="#000" fill="none"/><path d="M1 1.500h1M4 5.500h1M7 9.500h1" stroke="#fff"/></svg>
<svg style="left:418px;top:27px" width="16" height="16" shape-rendering="crispEdges"><g shape-rendering="auto"><path d="M5.300 0l3.700 8.500M10.200 0l-3.700 8.500" stroke="#000" stroke-width="1.200" fill="none"/><ellipse cx="5.200" cy="11.200" rx="1.700" ry="2.500" fill="none" stroke="#000090" stroke-width="1.200"/><ellipse cx="10.300" cy="11.200" rx="1.700" ry="2.500" fill="none" stroke="#000090" stroke-width="1.200"/></g></svg>
<svg style="left:441px;top:27px" width="16" height="16" shape-rendering="crispEdges"><path d="M0.5 0.5h5l3 3v6h-8z" fill="#fff" stroke="#000"/><path d="M2 3.5h3M2 5.5h5M2 7.5h5" stroke="#000"/><path d="M6.5 4.5h5l3 3v7h-8z" fill="#fff" stroke="#000080"/><path d="M8 8.5h3M8 10.5h5M8 12.5h5" stroke="#000080"/></svg>
<svg style="left:464px;top:27px" width="16" height="16" shape-rendering="crispEdges"><rect x="0" y="1" width="13" height="13" fill="#808080" rx="1"/><rect x="4" y="0" width="5" height="3" fill="#808080"/><path d="M4 3.5h5" stroke="#D4D0C8"/><path d="M7.5 7.5h6v6h-6z" fill="#A8A8A8" stroke="#D4D0C8"/><path d="M9 10.5h4M9 12.5h4" stroke="#D4D0C8"/><path d="M8 14.5h7v-7" stroke="#fff" fill="none"/></svg>
<svg style="left:486px;top:27px" width="16" height="16" shape-rendering="crispEdges"><path d="M3 1h3v3h1v-1h2v1h1v-3h3v3l2 5v5h-6v-5h-2v5h-6v-5l2-5z" fill="#000"/><path d="M2.5 9v3M11.5 9v3M4.5 5v2M12.5 5v2" stroke="#fff"/></svg>
<svg style="left:518px;top:27px" width="16" height="16" shape-rendering="crispEdges"><defs><pattern id="dg" width="2" height="2" patternUnits="userSpaceOnUse"><rect width="2" height="2" fill="#fff"/><rect width="1" height="1" fill="#808080"/><rect x="1" y="1" width="1" height="1" fill="#808080"/></pattern></defs><path d="M4.5 5.5v-4h8l2 2v2" fill="#fff" stroke="#000"/><path d="M7 3.5h5" stroke="#000"/><path d="M0.5 13.5v-6l2-2h12l1 1v7z" fill="#fff" stroke="#000"/><rect x="3" y="7" width="11" height="6" fill="url(#dg)"/></svg>
<svg style="left:541px;top:27px" width="16" height="16" shape-rendering="crispEdges"><path d="M4.5 6.5l2-5h7l-1 5" fill="#fff" stroke="#000"/><path d="M7 3.5h4M6.5 5.5h4" stroke="#000"/><path d="M0.5 12.5v-4l3-2h11l1 1v4l-2 2h-12z" fill="#fff" stroke="#000"/><path d="M1 9.5h13l1.5-2M1 11.5h12" stroke="#000" fill="none"/><rect x="7" y="10" width="3" height="1" fill="#ff0"/><path d="M2 13.5h11" stroke="#808080"/></svg>
<svg style="left:572px;top:27px" width="16" height="16" shape-rendering="crispEdges"><g shape-rendering="auto"><path d="M1.5 11.5l5.5-10.5l3 1.8l-5.5 10z" fill="#ff0" stroke="#000" stroke-width="1"/><path d="M7.5 1.2l2.6 1.6" stroke="#f00" stroke-width="2"/><path d="M3.5 9l3.6-7" stroke="#f00" stroke-width="1"/><path d="M1.2 13l0.4-2l1.6 1z" fill="#000"/></g><path d="M1 13.5h14" stroke="#00f"/></svg>
<svg style="left:594px;top:27px" width="16" height="16" shape-rendering="crispEdges"><path d="M7.5 0v8" stroke="#000"/><path d="M0.5 7.5h14l-7 7z" fill="#D4D0C8" stroke="#000" shape-rendering="auto"/><path d="M3 8.5h9.5l-5 5" stroke="#808000" fill="none" shape-rendering="auto"/></svg>
<svg style="left:617px;top:27px" width="16" height="16" shape-rendering="crispEdges"><rect x="0.5" y="1.5" width="14" height="9" rx="1" fill="#D4D0C8" stroke="#000"/><path d="M1.5 9.5v-7h12" stroke="#808000" fill="none"/><path d="M7.5 11v4" stroke="#000"/><path d="M5.5 9v-4l1-1h2l1 1v4M6 6.5h3" stroke="#000" fill="none"/></svg>
<svg style="left:641px;top:27px" width="16" height="16" shape-rendering="crispEdges"><path d="M7 0.5l5 4l-10 5l5.5 3v3" stroke="#000" stroke-width="1.3" fill="none" shape-rendering="auto"/></svg>
<svg style="left:664px;top:27px" width="16" height="16" shape-rendering="crispEdges"><path d="M6.5 0v6M6.5 10v5" stroke="#000"/><path d="M1 6h11M1 9.5h11" stroke="#000" stroke-width="1.6"/></svg>
<svg style="left:687px;top:27px" width="16" height="16" shape-rendering="crispEdges"><path d="M4 0.5q6 0 5 3.5q-1 3-4 3q5 0 4.5 4q-0.5 3-5.5 3.500" stroke="#000" stroke-width="1.4" fill="none" shape-rendering="auto"/></svg>
<svg style="left:710px;top:27px" width="16" height="16" shape-rendering="crispEdges"><path d="M7.5 0v15" stroke="#000"/><path d="M0.5 3.500h14l-7 8z" fill="#B4B4B4" stroke="#000" shape-rendering="auto"/><path d="M0 11.500h15" stroke="#000"/></svg>
<svg style="left:732px;top:27px" width="16" height="16" shape-rendering="crispEdges"><path d="M4.500 2.500h5q5 0 5 5q0 5-5 5h-5z" fill="#B0B0B0" stroke="#000" shape-rendering="auto"/><path d="M0 4.500h4M0 10.500h4M14 7.500h3" stroke="#000"/></svg>
<svg style="left:755px;top:27px" width="16" height="16" shape-rendering="crispEdges"><path d="M5.500 14.500l-5-6l1.500-1.500l3 2l-2.500-7l1.500-1l3 5l-0.500-5.500h2l1 5.500l1.500-4.500l2 0.500l-1 6l2-2l1.500 1l-3.500 8z" fill="#fff" stroke="#000" shape-rendering="auto"/></svg>
<svg style="left:779px;top:27px" width="16" height="16" shape-rendering="crispEdges"><path d="M4.500 13.500l-4-5.500l1.500-1.500l2 1.500v-3.500h2v-2h2.500v1.500h2v1.500h2.500v5l-2 3z" fill="#fff" stroke="#000" shape-rendering="auto"/><path d="M6.500 4.500v3M9 4v3.500M11.500 5.500v2.500" stroke="#000" fill="none"/></svg>
<svg style="left:801px;top:27px" width="16" height="16" shape-rendering="crispEdges"><g shape-rendering="auto"><path d="M3 6a5.500 5.500 0 1 1 3.500 7.500" stroke="#000" stroke-width="1.100" fill="none"/><path d="M5 3.500a5.500 5.500 0 0 1 8.500 2" stroke="#808000" stroke-width="1.100" fill="none"/><path d="M1 4.500v4.500h4.500z" fill="#000"/></g></svg>
<svg style="left:825px;top:27px" width="16" height="16" shape-rendering="crispEdges"><g shape-rendering="auto"><path d="M12 6a5.500 5.500 0 1 0 -3.500 7.500" transform="translate(1,1)" stroke="#fff" stroke-width="1.200" fill="none"/><path d="M12 6a5.500 5.500 0 1 0 -3.500 7.500" stroke="#909090" stroke-width="1.200" fill="none"/><path d="M15 4.500v5h-5z" fill="#fff"/><path d="M14.500 4v5.500h-5.500z" fill="#909090"/></g></svg>
<svg style="left:847px;top:27px" width="16" height="16" shape-rendering="crispEdges"><path d="M3 4l3-3h6l2 2.500M14.500 0.500v3.500h-3.500" transform="translate(1,1)" stroke="#fff" fill="none"/><path d="M3 4l3-3h6l2 2.500M14.500 0.500v3.500h-3.500" stroke="#808080" fill="none"/><rect x="0" y="6" width="2" height="9" fill="#808080"/><path d="M2 6.500h4M2 10.500h3M2 14.500h4" stroke="#808080"/><path d="M2 15.500h5M2 7.500h4" stroke="#fff"/><rect x="7" y="8" width="9" height="2" fill="#808080"/><path d="M7.500 10v4M11.500 10v3M15.500 10v4" stroke="#808080"/><path d="M8.500 10v4M12.500 10v3M16.500 9v5" stroke="#fff"/></svg>
<svg style="left:870px;top:27px" width="16" height="16" shape-rendering="crispEdges"><path d="M3 4l3-3h6l2 2.500M14.500 0.500v3.500h-3.500" transform="translate(1,1)" stroke="#fff" fill="none"/><path d="M3 4l3-3h6l2 2.500M14.500 0.500v3.500h-3.500" stroke="#808080" fill="none"/><rect x="0" y="6" width="2" height="9" fill="#808080"/><path d="M2 6.500h4M2 10.500h3M2 14.500h4" stroke="#808080"/><path d="M2 15.500h5M2 7.500h4" stroke="#fff"/><rect x="14" y="6" width="2" height="9" fill="#808080"/><path d="M10 6.500h4M11 10.500h3M10 14.500h4" stroke="#808080"/><path d="M10 15.500h7M16.500 6v10" stroke="#fff"/></svg>
<div class="t" style="left:893px;top:27px;font-family:'Liberation Serif',serif;font-style:italic;font-weight:bold;font-size:15px;letter-spacing:-1.2px">Aa</div>
<div class="t" style="left:916.500px;top:30px;font-size:11px;transform-origin:0 0;transform:scaleX(0.880)">.op</div>
</body></html>
